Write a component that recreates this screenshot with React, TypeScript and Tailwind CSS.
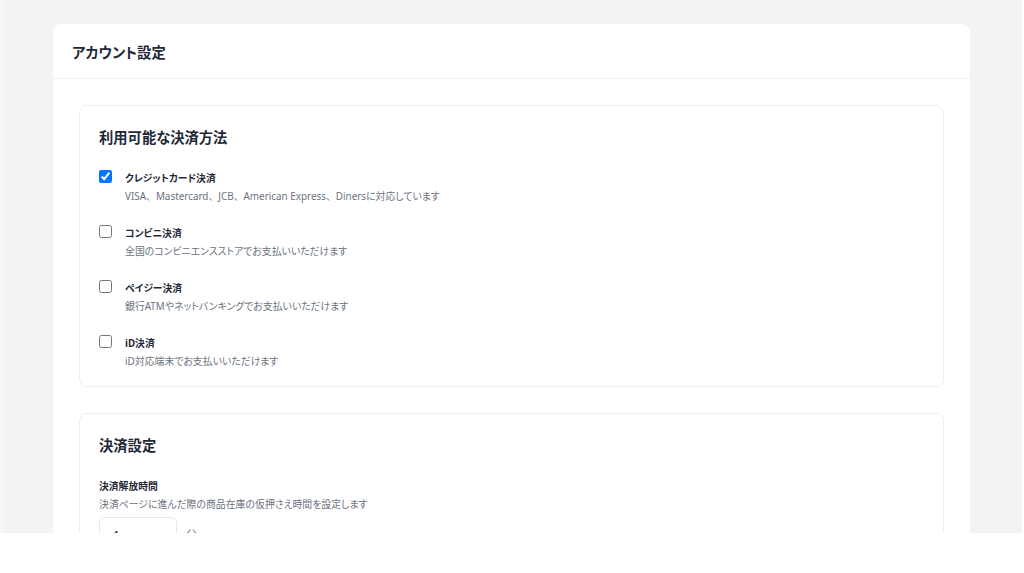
import React from 'react';

const methods = [
  { label: 'クレジットカード決済', desc: 'VISA、Mastercard、JCB、American Express、Dinersに対応しています', checked: true },
  { label: 'コンビニ決済', desc: '全国のコンビニエンスストアでお支払いいただけます', checked: false },
  { label: 'ペイジー決済', desc: '銀行ATMやネットバンキングでお支払いいただけます', checked: false },
  { label: 'iD決済', desc: 'iD対応端末でお支払いいただけます', checked: false },
];

// keep the ideographic comma full width while kana stay proportional
function Desc({ text }: { text: string }) {
  const parts = text.split('、');
  return (
    <div className="text-[9.9px] leading-[18px] text-[#6b7280]">
      {parts.map((p, i) => (
        <React.Fragment key={i}>
          {p}
          {i < parts.length - 1 && <span className="[font-feature-settings:normal]">、</span>}
        </React.Fragment>
      ))}
    </div>
  );
}

export default function App() {
  return (
    <div
      className="w-[1024px] h-[573px] bg-white overflow-hidden [font-feature-settings:'palt']"
      style={{ fontFamily: '"Noto Sans", "Noto Sans CJK JP", sans-serif' }}
    >
      <div className="w-[1022px] h-[533px] bg-[#f2f3f5] border-l-[4px] border-[#f5f6f8] overflow-hidden pt-6 pl-[49px] pr-[52px]">
        <div className="bg-white rounded-lg h-[600px]">
          {/* header */}
          <div className="h-[55px] px-[19px] pt-[3px] flex items-center border-b border-[#f0f1f3]">
            <h1 className="text-[14.3px] font-semibold text-[#1f2937]">アカウント設定</h1>
          </div>

          <div className="pt-[26px] px-[26px] flex flex-col gap-[26px]">
            {/* payment methods */}
            <section className="border border-[#eceef1] rounded-lg px-[19px] pt-[22px] pb-[16px]">
              <h2 className="text-[14.3px] leading-[20px] font-bold text-[#1f2937]">利用可能な決済方法</h2>
              <div className="mt-[23px] flex flex-col gap-[21px]">
                {methods.map((m) => (
                  <label key={m.label} className="flex items-start gap-[13px]">
                    <input
                      type="checkbox"
                      defaultChecked={m.checked}
                      className="m-0 -mt-[1px] w-[13px] h-[13px] shrink-0"
                    />
                    <div>
                      <div className="text-[9.8px] leading-[16px] font-bold text-[#1f2937]">{m.label}</div>
                      <Desc text={m.desc} />
                    </div>
                  </label>
                ))}
              </div>
            </section>

            {/* payment settings */}
            <section className="border border-[#eceef1] rounded-lg px-[19px] pt-[22px] pb-[20px]">
              <h2 className="text-[14.3px] leading-[20px] font-bold text-[#1f2937]">決済設定</h2>
              <div className="mt-[23px]">
                <div className="text-[9.8px] leading-[16px] font-bold text-[#1f2937]">決済解放時間</div>
                <Desc text="決済ページに進んだ際の商品在庫の仮押さえ時間を設定します" />
                <div className="mt-[4px] flex items-center gap-[9px]">
                  <input
                    type="number"
                    defaultValue={1}
                    className="w-[78px] h-[36px] px-[13px] border border-[#e5e7eb] rounded-md text-[12px] text-[#1f2937] outline-none"
                  />
                  <span className="text-[11px] text-[#6b7280]">分</span>
                </div>
              </div>
            </section>
          </div>
        </div>
      </div>
    </div>
  );
}
